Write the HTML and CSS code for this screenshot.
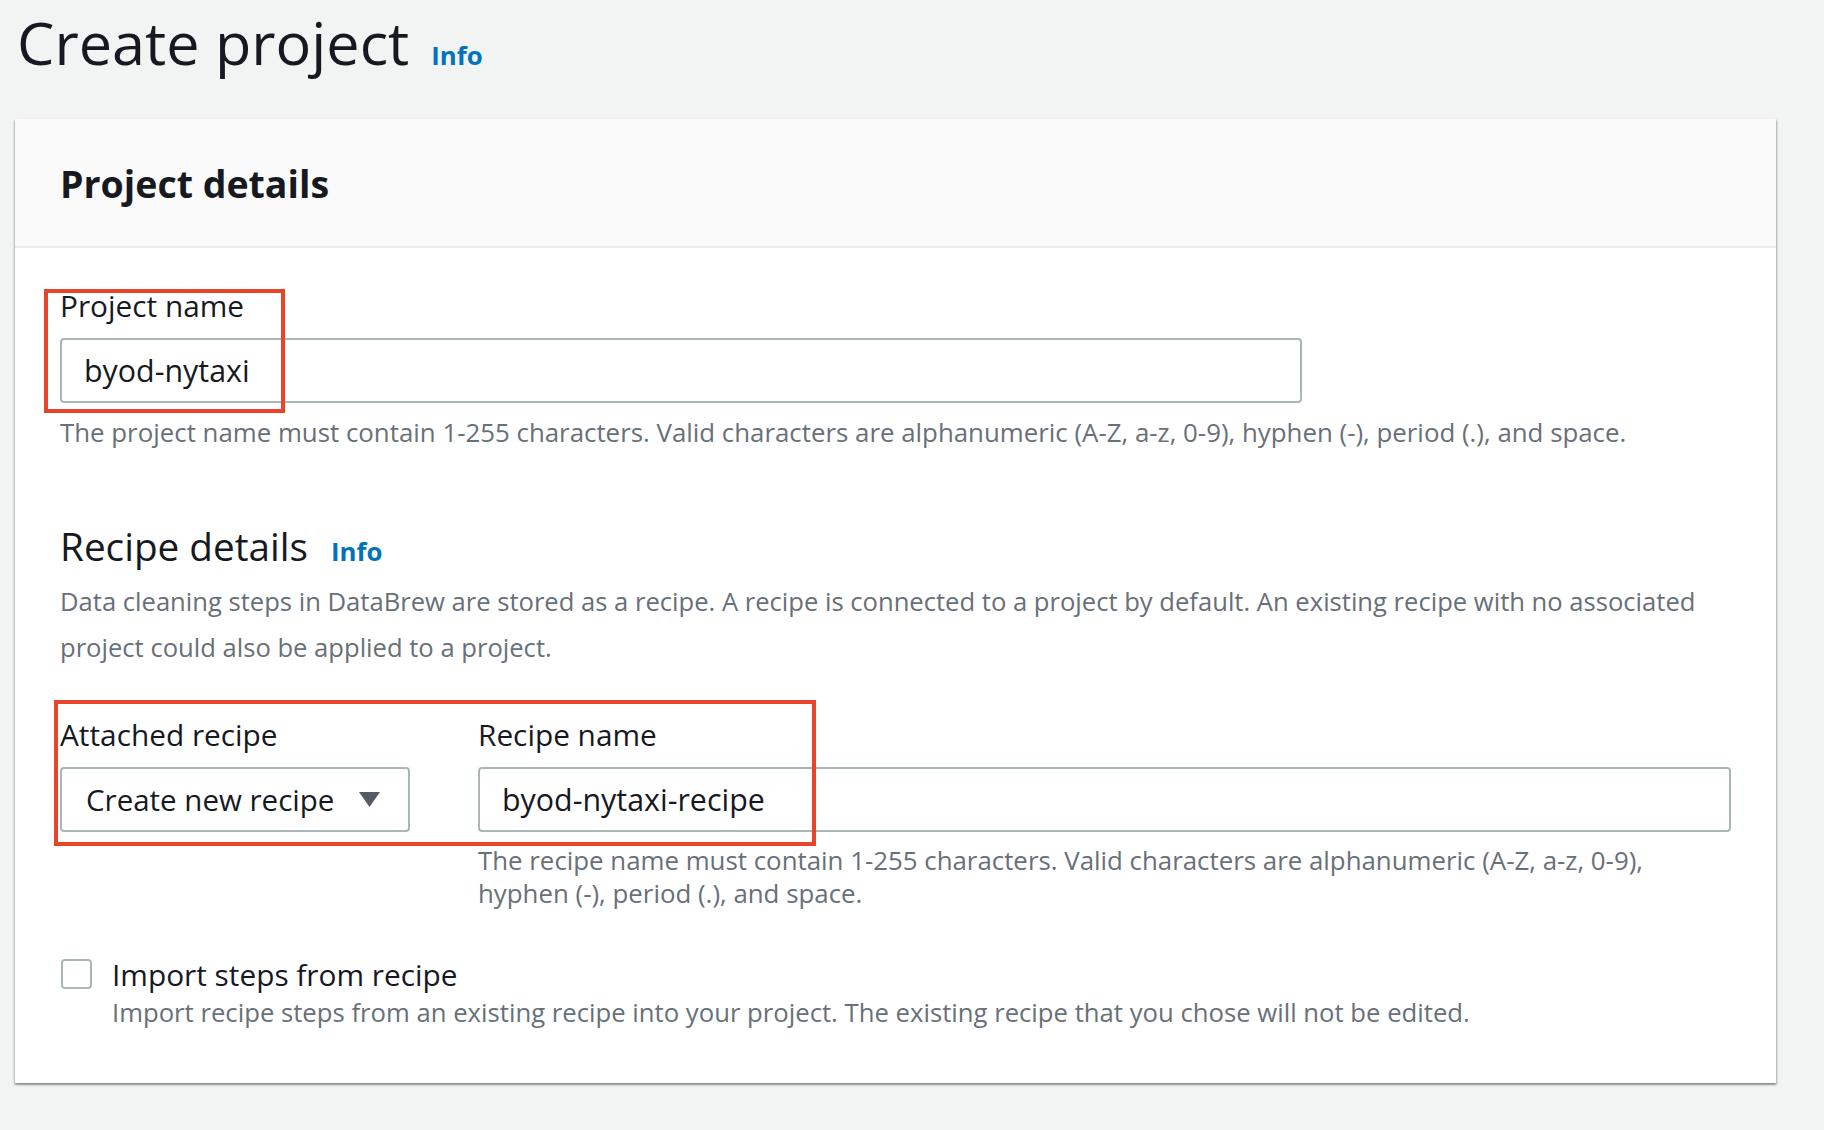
FILE: index.html
```html
<!DOCTYPE html>
<html lang="en">
<head>
<meta charset="utf-8">
<title>Create project</title>
<link rel="stylesheet" href="styles.css">
</head>
<body>
<div class="page">
  <header class="page-head">
    <h1 class="page-title">Create project</h1>
    <a class="info-link" href="#">Info</a>
  </header>

  <section class="card">
    <div class="card-head">
      <h2 class="card-title">Project details</h2>
    </div>
    <div class="card-body">
      <div class="field">
        <label class="field-label" for="pname">Project name</label>
        <input class="text-input project-input" id="pname" type="text" value="byod-nytaxi">
        <p class="hint">The project name must contain 1-255 characters. Valid characters are alphanumeric (A-Z, a-z, 0-9), hyphen (-), period (.), and space.</p>
      </div>

      <div class="section-head">
        <h3 class="section-title">Recipe details</h3>
        <a class="info-link" href="#">Info</a>
      </div>
      <p class="desc">Data cleaning steps in DataBrew are stored as a recipe. A recipe is connected to a project by default. An existing recipe with no associated project could also be applied to a project.</p>

      <div class="recipe-row">
        <div class="field select-field">
          <span class="field-label">Attached recipe</span>
          <div class="select-box">
            <span class="select-value">Create new recipe</span>
            <svg class="caret" width="21" height="15" viewBox="0 0 21 15" aria-hidden="true"><polygon points="0,0 21,0 10.5,15" fill="#545b64"/></svg>
          </div>
        </div>
        <div class="field name-field">
          <label class="field-label" for="rname">Recipe name</label>
          <input class="text-input" id="rname" type="text" value="byod-nytaxi-recipe">
          <p class="hint hint-wrap">The recipe name must contain 1-255 characters. Valid characters are alphanumeric (A-Z, a-z, 0-9), hyphen (-), period (.), and space.</p>
        </div>
      </div>

      <div class="check-row">
        <span class="checkbox" role="checkbox" aria-checked="false"></span>
        <div class="check-text">
          <div class="check-label">Import steps from recipe</div>
          <div class="check-desc">Import recipe steps from an existing recipe into your project. The existing recipe that you chose will not be edited.</div>
        </div>
      </div>
    </div>
  </section>

  <div class="annot annot-project"></div>
  <div class="annot annot-recipe"></div>
</div>
</body>
</html>
```

FILE: styles.css
```css
* { box-sizing: border-box; }

html, body {
  margin: 0;
  padding: 0;
  background: #f2f3f3;
}

body {
  font-family: "Open Sans", "Noto Sans", sans-serif;
  color: #16191f;
  width: 1824px;
  height: 1130px;
  overflow: hidden;
}

.page {
  position: relative;
  padding: 7px 48px 0 15px;
}

.page-head {
  display: flex;
  align-items: baseline;
  gap: 22px;
  padding-left: 2px;
}

.page-title {
  margin: 0;
  font-size: 59.4px;
  line-height: 70px;
  font-weight: 400;
  color: #16191f;
}

.info-link {
  font-size: 25.8px;
  font-weight: 700;
  color: #0073bb;
  text-decoration: none;
}

.card {
  margin-top: 42px;
  background: #ffffff;
  box-shadow: 0 2px 2px 0 rgba(0, 28, 36, 0.3), 1px 1px 2px 0 rgba(0, 28, 36, 0.22), -1px 1px 2px 0 rgba(0, 28, 36, 0.15);
}

.card-head {
  background: #fafafa;
  padding: 42px 45px 39px;
  border-bottom: 2px solid #eaeded;
}

.card-title {
  margin: 0;
  font-size: 37.5px;
  line-height: 46px;
  font-weight: 700;
}

.card-body {
  padding: 40px 45px 54px;
}

.field {
  display: flex;
  flex-direction: column;
}

.field-label {
  display: block;
  font-size: 29.8px;
  line-height: 36px;
  font-weight: 400;
  color: #16191f;
  margin-bottom: 14px;
}

.text-input {
  display: block;
  height: 65px;
  padding: 0 22px;
  border: 2px solid #aab7b8;
  border-radius: 4px;
  background: #ffffff;
  font-family: inherit;
  font-size: 30.4px;
  color: #16191f;
  outline: none;
}

.project-input {
  width: 1242px;
}

.hint {
  margin: 13px 0 0;
  font-size: 25.85px;
  line-height: 33px;
  color: #687078;
}

.hint-wrap {
  max-width: 1210px;
  margin-top: 12px;
}

.section-head {
  display: flex;
  align-items: baseline;
  gap: 23px;
  margin-top: 74px;
}

.section-title {
  margin: 0;
  font-size: 38.7px;
  line-height: 46px;
  font-weight: 400;
}

.desc {
  margin: 10px 0 0;
  font-size: 25.6px;
  line-height: 46px;
  color: #687078;
}

.recipe-row {
  display: flex;
  gap: 68px;
  margin-top: 46px;
}

.select-field {
  width: 350px;
  flex: none;
}

.select-box {
  height: 65px;
  border: 2px solid #aab7b8;
  border-radius: 4px;
  background: #ffffff;
  display: flex;
  align-items: center;
  justify-content: space-between;
  padding: 0 28px 0 24px;
}

.select-value {
  font-size: 29.5px;
  color: #16191f;
}

.caret {
  display: block;
  flex: none;
}

.name-field {
  flex: 1;
}

.name-field .text-input {
  width: 100%;
}

.check-row {
  display: flex;
  align-items: flex-start;
  gap: 20px;
  margin-top: 47px;
}

.checkbox {
  display: block;
  width: 31px;
  height: 30px;
  margin-top: 2px;
  margin-left: 1px;
  border: 2px solid #aab7b8;
  border-radius: 4px;
  background: #ffffff;
  flex: none;
}

.check-label {
  font-size: 29.8px;
  line-height: 36px;
  color: #16191f;
}

.check-desc {
  margin-top: 3px;
  font-size: 25.7px;
  line-height: 33px;
  color: #687078;
}

.annot {
  position: absolute;
  border: 4px solid #e8442a;
  pointer-events: none;
}

.annot-project {
  left: 44px;
  top: 289px;
  width: 241px;
  height: 124px;
}

.annot-recipe {
  left: 54px;
  top: 700px;
  width: 762px;
  height: 146px;
}
```
